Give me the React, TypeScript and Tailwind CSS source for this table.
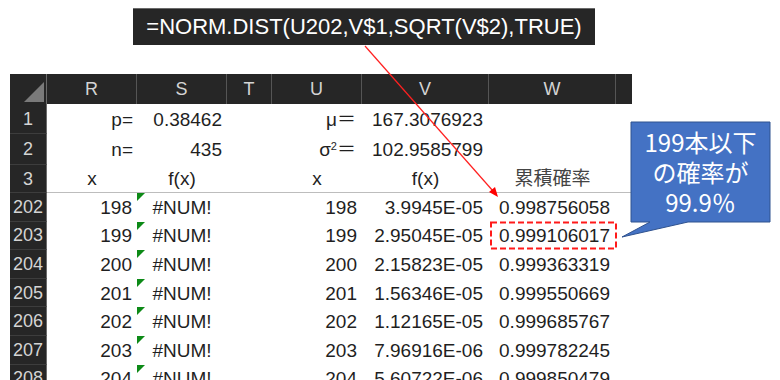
import React from "react";

const font = { fontFamily: '"Liberation Sans", "Noto Sans CJK JP", sans-serif' };

type Row = { n: string; x: string; u: string; v: string; w: string };

const rows: Row[] = [
  { n: "202", x: "198", u: "198", v: "3.9945E-05", w: "0.998756058" },
  { n: "203", x: "199", u: "199", v: "2.95045E-05", w: "0.999106017" },
  { n: "204", x: "200", u: "200", v: "2.15823E-05", w: "0.999363319" },
  { n: "205", x: "201", u: "201", v: "1.56346E-05", w: "0.999550669" },
  { n: "206", x: "202", u: "202", v: "1.12165E-05", w: "0.999685767" },
  { n: "207", x: "203", u: "203", v: "7.96916E-06", w: "0.999782245" },
  { n: "208", x: "204", u: "204", v: "5.60722E-06", w: "0.999850479" },
];

function RowHead({ label, h }: { label: string; h: string }) {
  return (
    <div
      className={`w-[37px] shrink-0 ${h} bg-[#262626] border-b border-[#3d3d3d] border-r border-r-[#6b6b6b] flex items-center justify-center text-[18px] text-[#d4d4d4]`}
    >
      {label}
    </div>
  );
}

function Green() {
  return (
    <div className="absolute left-0 top-0 w-0 h-0 border-t-[8px] border-t-[#0d8a17] border-r-[8px] border-r-transparent" />
  );
}

export default function App() {
  return (
    <div className="relative w-[780px] h-[380px] overflow-hidden bg-white text-[#1f1f1f]" style={font}>
      {/* formula */}
      <div className="pt-[8px] pl-[133px]">
        <div className="w-[462px] h-[37px] bg-[#262626] border-t border-[#6a6a6a] flex items-center justify-center text-white text-[22px] leading-none">
          =NORM.DIST(U202,V$1,SQRT(V$2),TRUE)
        </div>
      </div>

      {/* sheet */}
      <div className="mt-[29px] ml-[10px] flex flex-col text-[19px] leading-none">
        {/* header */}
        <div className="flex h-[30px] w-[622px] bg-[#262626] text-[#d4d4d4] text-[18px]">
          <div className="w-[37px] shrink-0 relative border-r border-[#6b6b6b]">
            <div className="absolute right-[2px] bottom-[2px] w-0 h-0 border-l-[20px] border-l-transparent border-b-[20px] border-b-[#7a7a7a]" />
          </div>
          <div className="w-[90px] shrink-0 flex items-center justify-center border-r border-[#555]">R</div>
          <div className="w-[90px] shrink-0 flex items-center justify-center border-r border-[#555]">S</div>
          <div className="w-[45px] shrink-0 flex items-center justify-center border-r border-[#555]">T</div>
          <div className="w-[90px] shrink-0 flex items-center justify-center border-r border-[#555]">U</div>
          <div className="w-[127px] shrink-0 flex items-center justify-center border-r border-[#555]">V</div>
          <div className="w-[127px] shrink-0 flex items-center justify-center border-r border-[#555]">W</div>
          <div className="w-[16px] shrink-0" />
        </div>

        {/* row 1 */}
        <div className="flex h-[30px]">
          <RowHead label="1" h="h-[30px]" />
          <div className="w-[90px] shrink-0 flex items-center justify-end pr-[4px]">p=</div>
          <div className="w-[90px] shrink-0 flex items-center justify-end pr-[5px]">0.38462</div>
          <div className="w-[45px] shrink-0" />
          <div className="w-[90px] shrink-0 flex items-center justify-end pr-[6px]">μ＝</div>
          <div className="w-[127px] shrink-0 flex items-center justify-end pr-[6px]">167.3076923</div>
        </div>
        {/* row 2 */}
        <div className="flex h-[31px]">
          <RowHead label="2" h="h-[31px]" />
          <div className="w-[90px] shrink-0 flex items-center justify-end pr-[4px]">n=</div>
          <div className="w-[90px] shrink-0 flex items-center justify-end pr-[5px]">435</div>
          <div className="w-[45px] shrink-0" />
          <div className="w-[90px] shrink-0 flex items-center justify-end pr-[6px]">
            σ<sup className="text-[11px] relative -top-[4px]">2</sup>＝
          </div>
          <div className="w-[127px] shrink-0 flex items-center justify-end pr-[6px]">102.9585799</div>
        </div>
        {/* row 3 */}
        <div className="flex h-[28px] w-[622px] border-b border-[#bdbdbd]">
          <RowHead label="3" h="h-[28px]" />
          <div className="w-[90px] shrink-0 flex items-center justify-center">x</div>
          <div className="w-[90px] shrink-0 flex items-center justify-center">f(x)</div>
          <div className="w-[45px] shrink-0" />
          <div className="w-[90px] shrink-0 flex items-center justify-center">x</div>
          <div className="w-[127px] shrink-0 flex items-center justify-center">f(x)</div>
          <div className="w-[127px] shrink-0 flex items-center justify-center text-[#444]">累積確率</div>
        </div>

        {rows.map((r) => (
          <div key={r.n} className="flex h-[28.6px]">
            <RowHead label={r.n} h="h-[28.6px]" />
            <div className="w-[90px] shrink-0 flex items-center justify-end pr-[5px]">{r.x}</div>
            <div className="w-[90px] shrink-0 flex items-center justify-center relative">
              <Green />
              #NUM!
            </div>
            <div className="w-[45px] shrink-0" />
            <div className="w-[90px] shrink-0 flex items-center justify-end pr-[5px]">{r.u}</div>
            <div className="w-[127px] shrink-0 flex items-center justify-end pr-[6px]">{r.v}</div>
            <div className="w-[127px] shrink-0 flex items-center justify-end pr-[6px]">{r.w}</div>
          </div>
        ))}
      </div>

      {/* overlays */}
      <svg className="absolute left-0 top-0 pointer-events-none" width="780" height="380" viewBox="0 0 780 380">
        <line x1="365" y1="46" x2="493" y2="191" stroke="#ff2020" strokeWidth="1.2" />
        <polygon points="498,197 489,192 495,187" fill="#ff0000" />
        <rect x="491" y="222.5" width="125" height="26" fill="none" stroke="#ff1a1a" strokeWidth="2" strokeDasharray="6 3" />
        <path d="M631,122 H770 V222 H688 L622,237 L650,222 H631 Z" fill="#4472c4" stroke="#2f528f" strokeWidth="1" />
      </svg>
      <div
        className="absolute left-[631px] top-[122px] w-[139px] h-[100px] flex flex-col items-center justify-center text-white text-[24px] leading-[30px]"
        style={{ fontFamily: '"Noto Sans CJK JP", "Liberation Sans", sans-serif' }}
      >
        <div>199本以下</div>
        <div>の確率が</div>
        <div>99.9％</div>
      </div>
    </div>
  );
}
